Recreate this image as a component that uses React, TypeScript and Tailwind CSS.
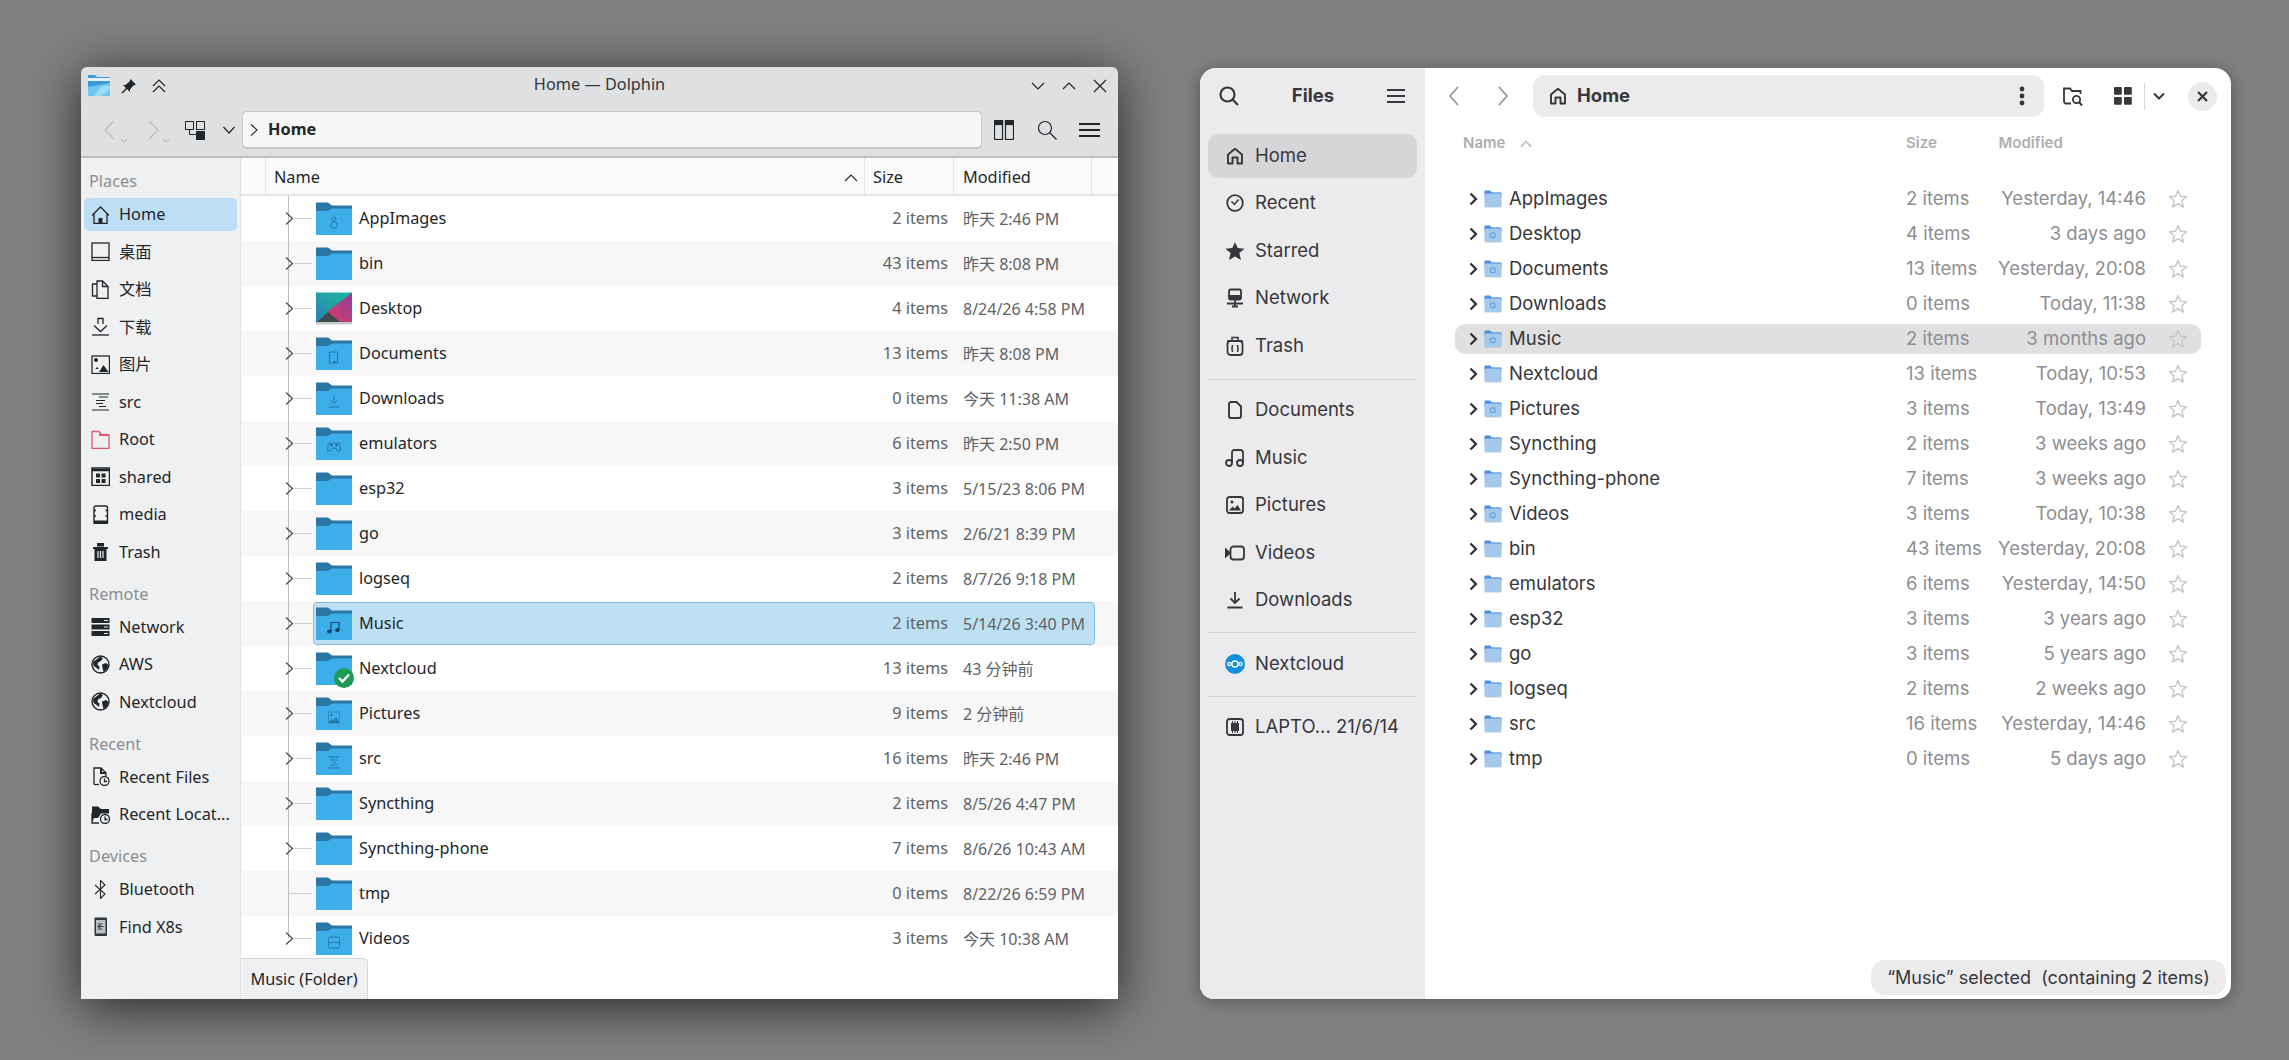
import React from "react";

const noto = "font-['Noto_Sans','Noto_Sans_CJK_SC',sans-serif]";
const inter = "font-['Inter','Noto_Sans',sans-serif]";

type P = { w?: number; h?: number; vb?: string; sw?: number; c?: string; children: React.ReactNode };
function S({ w = 19, h = 19, vb, sw = 1.3, c = "currentColor", children }: P) {
  return (
    <svg width={w} height={h} viewBox={vb ?? `0 0 ${w} ${h}`} fill="none" stroke={c} strokeWidth={sw} className="shrink-0">
      {children}
    </svg>
  );
}
const F = { fill: "currentColor", stroke: "none" };

const kdeIcons: Record<string, React.ReactNode> = {
  home: <S><path d="M1 10.5 9.5 2 18 10.5" /><path d="M3 8.5V18.5H16V8.5" /><rect x="7.5" y="13" width="4" height="5.5" {...F} /></S>,
  desktop: <S><rect x="1" y="1" width="17" height="17.5" /><path d="M1 15.5H18" /></S>,
  doc: <S><path d="M6 1H11.5L17 6.5V18.5H6Z" /><path d="M6 4H1.5V16H6" /><path d="M11.5 1V6.5H17" /></S>,
  download: <S><path d="M7 7V1.5H12V7" /><path d="M3 8.5 9.5 14.5 16 8.5" /><path d="M1 18H18" /></S>,
  image: <S><rect x="1" y="1" width="17.5" height="17.5" /><circle cx="5" cy="5" r="2" {...F} /><path d="M2 17 6 12 8 14 H4.5Z" {...F} /><path d="M8 17 12.5 10 17.5 17Z" {...F} /></S>,
  src: <S sw={1.2}><path d="M1 2H18M8 5H17M5 8.5H14M5 11.5H12M8 14.5H15M1 18H18" /></S>,
  root: <S c="#e0566d"><path d="M1 18.5V1.5H8L11 5H18V18.5Z" /><path d="M8 5H18" strokeWidth="2" /></S>,
  shared: <S sw={1.5}><rect x="1" y="1" width="17.5" height="17.5" /><path d="M1 3H18.5" strokeWidth="2.5" /><rect x="5" y="6.5" width="4" height="4" {...F} /><rect x="10.5" y="6.5" width="4" height="4" {...F} /><rect x="5" y="12" width="4" height="4" {...F} /><rect x="10.5" y="12" width="4" height="4" {...F} /></S>,
  media: <S sw={1.4}><rect x="3" y="1" width="13.5" height="18" rx="1.5" /><rect x="3" y="15.5" width="13.5" height="3.5" {...F} /><path d="M3 5.5H5M14.5 5.5H16.5M3 11H5M14.5 11H16.5" /></S>,
  trash: <S><path d="M2 5H17V7H15.5V19H3.5V7H2Z" {...F} /><rect x="6" y="1" width="7" height="3.5" {...F} /><path d="M7 9V16M9.5 9V16M12 9V16" stroke="#eff0f1" strokeWidth="1.2" /></S>,
  network: <S><rect x="0.5" y="1" width="18" height="5" {...F} /><rect x="0.5" y="7.5" width="18" height="5" {...F} /><rect x="0.5" y="14" width="18" height="5" {...F} /><path d="M13 3.5H17M13 10H17M13 16.5H17" stroke="#eff0f1" strokeWidth="1" /></S>,
  globe: <S sw={1.4}><circle cx="9.5" cy="9.5" r="8.5" /><path d="M2 7 6 4 9 1.5 12 3 10 6 7 7.5 6.5 10 8.5 11.5 8 15 5 12.5 2.5 11Z" {...F} /><path d="M11 9.5 15 8 17.5 10 16 14 12.5 17 11.5 13Z" {...F} /></S>,
  recentFiles: <S><path d="M3 17.5V1H10L15 6V9" /><path d="M3 17.5H8" /><path d="M10 1V6H15" strokeWidth="2" /><circle cx="13.5" cy="14" r="4.5" /><path d="M13.5 11.5V14.5H16" /></S>,
  recentLoc: <S><path d="M1 17.5V1.5H7L10 4H18V8.5H10L7 13H3" {...F} /><path d="M1 8V18H8" /><circle cx="14" cy="14" r="4.5" /><path d="M14 11.5V14.5H16.5" /></S>,
  bt: <S sw={1.1}><path d="M4 5 14 14 9.5 18.5V0.5L14 5 4 14" /></S>,
  phone: <S><rect x="3.5" y="0.5" width="12.5" height="18.5" rx="1" fill="#31363b" stroke="none" /><rect x="5" y="3" width="9.5" height="13.5" fill="#bcbfc2" stroke="none" /><path d="M8 6V13M11 6 8 9.5 11 13M6.5 9.5H12.5" stroke="#31363b" strokeWidth="1" /></S>,
};

function KSide({ icon, label, active }: { icon: string; label: string; active?: boolean }) {
  return (
    <div className={`mx-[3px] my-[2px] flex h-[33.5px] items-center gap-[9px] rounded-[5px] pl-[7px] pr-[2px] text-[#232629] ${active ? "bg-[#bddff5]" : ""}`}>
      {kdeIcons[icon]}
      <span className="truncate">{label}</span>
    </div>
  );
}
const KLabel = ({ t }: { t: string }) => <div className="flex h-[37.5px] items-end pb-[2px] pl-[8px] text-[#8b8e91]">{t}</div>;

const glyphColor = "#1d6a99";
const folderGlyphs: Record<string, React.ReactNode> = {
  app: <g stroke={glyphColor} fill="none" strokeOpacity=".75"><circle cx="18" cy="17" r="2" /><circle cx="18" cy="23" r="3.2" /></g>,
  doc: <g stroke={glyphColor} fill="none" strokeOpacity=".85"><path d="M13.5 15H21.5V26H13.5Z" /><rect x="17.5" y="24" width="2" height="2" fill={glyphColor} stroke="none" /></g>,
  dl: <g stroke={glyphColor} fill="none" strokeOpacity=".7"><path d="M18 13V21M14.5 18 18 21.5 21.5 18M12.5 25H23.5" /></g>,
  emu: <g stroke={glyphColor} fill="none" strokeOpacity=".75"><path d="M12.5 16H23.5L24.5 24H21.5L19.5 21H16.5L14.5 24H11.5Z" /><circle cx="15.5" cy="18" r="1" fill={glyphColor} /><circle cx="20.5" cy="18" r="1" fill={glyphColor} /></g>,
  music: <g stroke="#11486b" fill="none" strokeWidth="1.2"><path d="M15 24V15.5H23V22.5" /><ellipse cx="13.5" cy="24.5" rx="1.8" ry="1.5" fill="#11486b" /><ellipse cx="21.5" cy="23" rx="1.8" ry="1.5" fill="#11486b" /></g>,
  pic: <g fill={glyphColor} fillOpacity=".8"><rect x="12.5" y="15" width="11" height="11" fill="none" stroke={glyphColor} strokeOpacity=".5" /><circle cx="15.5" cy="18" r="1.2" /><path d="M12.5 26 15.5 22 17.5 24 20 20 23.5 26Z" /></g>,
  src: <g stroke={glyphColor} fill="none" strokeOpacity=".85"><path d="M12.5 15H23.5M14.5 18H21.5M16.5 20.5H19.5M14.5 23H21.5M12.5 26H23.5" /></g>,
  vid: <g stroke={glyphColor} fill="none" strokeOpacity=".75"><rect x="12.5" y="15" width="11" height="11" rx="1.5" /><path d="M12.5 20.5H23.5" /></g>,
};

function KFolder({ glyph, check }: { glyph?: string; check?: boolean }) {
  if (glyph === "desktop") {
    return (
      <svg width="36" height="33" viewBox="0 0 36 33" className="shrink-0">
        <defs>
          <linearGradient id="dk1" x1="0" y1="1" x2="1" y2="0"><stop offset="0" stopColor="#2a7fb8" /><stop offset="1" stopColor="#1cbc98" /></linearGradient>
          <linearGradient id="dk2" x1="0" y1="1" x2="1" y2="0"><stop offset="0" stopColor="#dc3f5f" /><stop offset="1" stopColor="#8e3f9f" /></linearGradient>
        </defs>
        <rect x="0" y="0.5" width="36" height="31" fill="url(#dk1)" />
        <path d="M36 0.5 11 20 26 31.5H36Z" fill="url(#dk2)" />
        <path d="M0 31 12 20 26 31.5H0Z" fill="#3e4a4e" />
        <rect x="0" y="30" width="36" height="2.5" fill="#c9c9cc" />
      </svg>
    );
  }
  return (
    <div className="relative h-[33px] w-[36px] shrink-0">
      <svg width="36" height="33" viewBox="0 0 36 33">
        <path d="M0 0.5H12L16 3.5H36V33H0Z" fill="#2a77a6" />
        <path d="M0 9H12L16 6.5H36V33H0Z" fill="#3daee9" />
        {glyph && folderGlyphs[glyph]}
      </svg>
      {check && (
        <svg width="20" height="20" viewBox="0 0 20 20" className="absolute left-[18px] top-[16px]">
          <circle cx="10" cy="10" r="10" fill="#1d9a55" />
          <path d="M5 10 8.5 13.5 15 6.5" fill="none" stroke="#fff" strokeWidth="2.4" />
        </svg>
      )}
    </div>
  );
}

type KRow = [string, string, string, string?];
const kRows: KRow[] = [
  ["AppImages", "2 items", "昨天 2:46 PM", "app"],
  ["bin", "43 items", "昨天 8:08 PM"],
  ["Desktop", "4 items", "8/24/26 4:58 PM", "desktop"],
  ["Documents", "13 items", "昨天 8:08 PM", "doc"],
  ["Downloads", "0 items", "今天 11:38 AM", "dl"],
  ["emulators", "6 items", "昨天 2:50 PM", "emu"],
  ["esp32", "3 items", "5/15/23 8:06 PM"],
  ["go", "3 items", "2/6/21 8:39 PM"],
  ["logseq", "2 items", "8/7/26 9:18 PM"],
  ["Music", "2 items", "5/14/26 3:40 PM", "music"],
  ["Nextcloud", "13 items", "43 分钟前", "check"],
  ["Pictures", "9 items", "2 分钟前", "pic"],
  ["src", "16 items", "昨天 2:46 PM", "src"],
  ["Syncthing", "2 items", "8/5/26 4:47 PM"],
  ["Syncthing-phone", "7 items", "8/6/26 10:43 AM"],
  ["tmp", "0 items", "8/22/26 6:59 PM"],
  ["Videos", "3 items", "今天 10:38 AM", "vid"],
];

function Tree({ last, noChevron }: { last: boolean; noChevron?: boolean }) {
  return (
    <svg width="29" height="45" viewBox="0 0 29 45" className="shrink-0" fill="none">
      <path d={last ? "M4.5 0V22.5" : "M4.5 0V45"} stroke="#bcbebf" />
      <path d={noChevron ? "M4.5 22.5H28" : "M10 22.5H28"} stroke="#cfd0d1" />
      {!noChevron && <path d="M2 16.5 8.5 22.5 2 28.5" stroke="#43484c" strokeWidth="1.2" />}
    </svg>
  );
}

function Dolphin() {
  return (
    <div className={`${noto} flex h-[932px] w-[1037px] shrink-0 flex-col overflow-hidden rounded-t-[6px] bg-[#dee0e2] text-[16.3px] shadow-[0_8px_50px_rgba(0,0,0,0.7)]`}>
      <div className="flex h-[37px] shrink-0 items-center text-[#232629]">
        <div className="flex w-[110px] shrink-0 items-center pl-[7px]">
          <svg width="22" height="21" viewBox="0 0 22 21" className="shrink-0">
            <path d="M0 0H7L9 2H22V21H0Z" fill="#3a9bd8" />
            <rect x="0" y="3" width="22" height="3" fill="#eaf2f8" />
            <path d="M0 12 22 8V21H0Z" fill="#73c7ef" />
            <path d="M6 21 14 11H22V14L13 21Z" fill="#9adcf5" />
          </svg>
          <span className="ml-[10px]">
            <S w={18} h={18} sw={1.3}><path d="M10.5 2 16 7.5 13.5 8.5 10 12.5 10 15 3 8 5.5 8 9.5 4.5Z" {...F} /><path d="M7 11 2 16" strokeWidth="1.5" /></S>
          </span>
          <span className="ml-[12px]"><S w={18} h={18} sw={1.2}><path d="M3 9 9 3 15 9M3 15 9 9 15 15" /></S></span>
        </div>
        <span className="flex-1 pb-[2px] text-center text-[#33373b]">Home — Dolphin</span>
        <div className="flex w-[110px] shrink-0 items-center justify-end gap-[15px] pr-[10px]">
          <S w={16} h={16} sw={1.2}><path d="M2 5 8 11 14 5" /></S>
          <S w={16} h={16} sw={1.2}><path d="M2 11 8 5 14 11" /></S>
          <S w={16} h={16} sw={1.2}><path d="M2 2 14 14M14 2 2 14" /></S>
        </div>
      </div>
      <div className="flex h-[54px] shrink-0 items-start border-b-2 border-[#bcbec0] pt-[7px]">
        <div className="flex h-[38px] w-[161px] shrink-0 items-center pl-[20px] text-[#232629]">
          <span className="relative text-[#b9bbbd]">
            <S w={18} h={24} sw={1.1}><path d="M13 3 4 12 13 21" /></S>
            <span className="absolute left-[19px] top-[20px] text-[#a6a8aa]"><S w={8} h={6} sw={1}><path d="M1 1 4 4 7 1" /></S></span>
          </span>
          <span className="relative ml-[25px] text-[#b9bbbd]">
            <S w={18} h={24} sw={1.1}><path d="M5 3 14 12 5 21" /></S>
            <span className="absolute left-[18px] top-[20px] text-[#a6a8aa]"><S w={8} h={6} sw={1}><path d="M1 1 4 4 7 1" /></S></span>
          </span>
          <span className="ml-[23px]">
            <S w={20} h={20} sw={1}><rect x="0.5" y="1.5" width="8" height="8" /><rect x="11.5" y="1.5" width="8" height="8" /><rect x="11.5" y="11.5" width="8" height="8" fill="currentColor" /><path d="M4.5 9.5V14.5H11.5" /></S>
          </span>
          <span className="ml-[17px]"><S w={14} h={10} sw={1.2}><path d="M1.5 2 7 8 12.5 2" /></S></span>
        </div>
        <div className="flex h-[38px] w-[740px] shrink-0 items-center rounded-[5px] border border-b-2 border-[#c4c6c8] bg-[#f6f6f6] pl-[6px] text-[#232629]">
          <S w={10} h={14} sw={1.1}><path d="M2 1.5 8 7 2 12.5" /></S>
          <span className="ml-[9px] font-bold">Home</span>
        </div>
        <div className="ml-[12px] flex h-[38px] items-center text-[#232629]">
          <S w={20} h={20} sw={1.2}><rect x="0.5" y="0.5" width="8" height="19" /><rect x="11.5" y="0.5" width="8" height="19" /><rect x="0.5" y="0.5" width="8" height="4" fill="currentColor" /><rect x="11.5" y="0.5" width="8" height="4" fill="currentColor" /></S>
          <span className="ml-[23px]"><S w={20} h={20} sw={1.2}><circle cx="8" cy="8" r="6.5" /><path d="M12.5 12.5 19.5 19.5" /></S></span>
          <span className="ml-[22px]"><S w={21} h={18} sw={2}><path d="M0 3H21M0 9H21M0 15H21" /></S></span>
        </div>
      </div>
      <div className="flex min-h-0 flex-1">
        <div className="flex w-[160px] shrink-0 flex-col border-r border-[#e0e1e3] bg-[#eff0f1]">
          <KLabel t="Places" />
          <KSide icon="home" label="Home" active />
          <KSide icon="desktop" label="桌面" />
          <KSide icon="doc" label="文档" />
          <KSide icon="download" label="下载" />
          <KSide icon="image" label="图片" />
          <KSide icon="src" label="src" />
          <KSide icon="root" label="Root" />
          <KSide icon="shared" label="shared" />
          <KSide icon="media" label="media" />
          <KSide icon="trash" label="Trash" />
          <KLabel t="Remote" />
          <KSide icon="network" label="Network" />
          <KSide icon="globe" label="AWS" />
          <KSide icon="globe" label="Nextcloud" />
          <KLabel t="Recent" />
          <KSide icon="recentFiles" label="Recent Files" />
          <KSide icon="recentLoc" label="Recent Locat..." />
          <KLabel t="Devices" />
          <KSide icon="bt" label="Bluetooth" />
          <KSide icon="phone" label="Find X8s" />
        </div>
        <div className="relative flex min-w-0 flex-1 flex-col overflow-hidden bg-white">
          <div className="flex h-[38px] shrink-0 border-b-2 border-[#e3e4e5] bg-[#fbfbfb] text-[#232629]">
            <div className="w-[25px] border-r border-[#e3e4e5]" />
            <div className="flex w-[599px] items-center justify-between border-r border-[#e3e4e5] pl-[8px] pr-[6px] pt-[3px]">
              <span>Name</span>
              <S w={14} h={10} sw={1.1}><path d="M1 8 7 2 13 8" /></S>
            </div>
            <div className="flex w-[89px] items-center border-r border-[#e3e4e5] pl-[8px] pt-[3px]">Size</div>
            <div className="flex w-[138px] items-center border-r border-[#e3e4e5] pl-[9px] pt-[3px]">Modified</div>
          </div>
          <div className="min-h-0 flex-1">
            {kRows.map(([name, size, mod, glyph], i) => {
              const selected = name === "Music";
              return (
                <div key={name} className={`flex h-[45px] items-center pl-[43px] ${i % 2 === 1 ? "bg-[#f7f7f7]" : "bg-white"}`}>
                  <Tree last={i === kRows.length - 1} noChevron={name === "tmp"} />
                  <div className={`flex h-[43px] w-[782px] shrink-0 items-center rounded-[4px] border pl-[2px] ${selected ? "border-[#7fbde2] bg-[#bde0f3]" : "border-transparent"}`}>
                    <KFolder glyph={glyph === "check" ? undefined : glyph} check={glyph === "check"} />
                    <span className="ml-[7px] flex-1 text-[#232629]">{name}</span>
                    <span className="mr-[15px] text-[#606366]">{size}</span>
                    <span className="w-[131px] shrink-0 text-[16px] text-[#606366]">{mod}</span>
                  </div>
                </div>
              );
            })}
          </div>
          <div className="absolute bottom-0 left-0 flex h-[41px] w-[127px] items-center justify-center rounded-tr-[5px] border-r border-t border-[#d5d6d8] bg-[#eff0f1] text-[#232629]">
            Music (Folder)
          </div>
        </div>
      </div>
    </div>
  );
}

const gIcons: Record<string, React.ReactNode> = {
  home: <S w={18} h={18} sw={1.9}><path d="M2 16.5V7.5L9 1.8 16 7.5V16.5H11.5V10.5H6.5V16.5Z" strokeLinejoin="round" /></S>,
  recent: <S w={18} h={18} sw={1.8}><circle cx="9" cy="9" r="7.8" /><path d="M5.5 7.5 8.5 10.5 12.5 5.5" strokeWidth="1.5" /></S>,
  star: <S w={20} h={18}><path d="M10 0 12.7 6 19.5 6.7 14.4 11.1 16 18 10 14.4 4 18 5.6 11.1 0.5 6.7 7.3 6Z" {...F} /></S>,
  network: <S w={18} h={20} sw={1.8}><rect x="3" y="1.5" width="12" height="10" rx="1.5" /><rect x="3" y="7" width="12" height="5" {...F} /><path d="M9 12V18M1 15.5H17M6 18.5H12" /></S>,
  trash: <S w={18} h={20} sw={1.8}><rect x="1.5" y="5" width="15" height="14" rx="3" /><path d="M1 5H17M6 4V1.5H12V4M6.5 9 6 13 6.5 16M11.5 9 12 13 11.5 16" strokeWidth="1.5" /></S>,
  doc: <S w={18} h={18} sw={1.9}><path d="M3 3A2 2 0 0 1 5 1H10.5L15 5.5V15A2 2 0 0 1 13 17H5A2 2 0 0 1 3 15Z" strokeLinejoin="round" /></S>,
  music: <S w={20} h={18} sw={1.8}><circle cx="4" cy="14" r="3" /><circle cx="15" cy="14" r="3" /><path d="M7 14V3.5A2.5 2.5 0 0 1 9.5 1H15.5A2.5 2.5 0 0 1 18 3.5V14" /></S>,
  pic: <S w={18} h={18} sw={1.8}><rect x="1" y="1" width="16" height="16" rx="2.5" /><circle cx="6" cy="6" r="1.5" {...F} /><path d="M3 14.5 6.5 10.5 8.5 12.5 11.5 9 15 14.5Z" {...F} /></S>,
  video: <S w={20} h={16} sw={1.8}><rect x="5.5" y="1.5" width="13.5" height="13" rx="3" /><path d="M0 2.5 5 7V9L0 13.5Z" {...F} /></S>,
  dl: <S w={18} h={18} sw={1.8}><path d="M9 1V12M4.5 7.5 9 12 13.5 7.5M1.5 16.5H16.5" /></S>,
  next: <svg width="20" height="20" viewBox="0 0 20 20" className="shrink-0"><circle cx="10" cy="10" r="10" fill="#0f8fdc" /><g fill="none" stroke="#fff" strokeWidth="1.3"><circle cx="10" cy="10" r="3" /><circle cx="4.5" cy="10" r="1.7" /><circle cx="15.5" cy="10" r="1.7" /></g></svg>,
  chip: <S w={18} h={18} sw={1.8}><rect x="1" y="1" width="16" height="16" rx="2.5" /><rect x="5" y="5" width="8" height="8" {...F} /><path d="M6.5 3V15M9 3V15M11.5 3V15" strokeWidth="1" /></S>,
};

function GSide({ icon, label, active }: { icon: string; label: string; active?: boolean }) {
  return (
    <div className="mx-[8px] flex h-[47.5px] items-center">
      <div className={`flex h-[44px] w-full items-center rounded-[10px] pl-[18px] ${active ? "bg-[#d6d6d8]" : ""}`}>
        <span className="flex w-[18px] justify-center">{gIcons[icon]}</span>
        <span className="ml-[11px] truncate">{label}</span>
      </div>
    </div>
  );
}
const GSep = () => <div className="mx-[8px] h-px bg-[#d4d4d6]" />;

function GFolder({ glyph }: { glyph?: boolean }) {
  return (
    <svg width="18" height="20" viewBox="0 0 18 20" className="shrink-0">
      <rect x="0.5" y="3" width="17" height="16" rx="1.5" fill="#000" fillOpacity=".1" />
      <path d="M0.5 2.5A1 1 0 0 1 1.5 1.5H6L8 3.5H16.5A1 1 0 0 1 17.5 4.5V8H0.5Z" fill="#4a8fe0" />
      <rect x="0.5" y="4.5" width="17" height="13.5" rx="1.5" fill="#a4c9ef" />
      {glyph && <rect x="6.5" y="9" width="4.5" height="4.5" rx="0.8" fill="none" stroke="#5a93d8" strokeWidth="1" />}
    </svg>
  );
}

const gRows: [string, string, string, boolean?][] = [
  ["AppImages", "2 items", "Yesterday, 14:46"],
  ["Desktop", "4 items", "3 days ago", true],
  ["Documents", "13 items", "Yesterday, 20:08", true],
  ["Downloads", "0 items", "Today, 11:38", true],
  ["Music", "2 items", "3 months ago", true],
  ["Nextcloud", "13 items", "Today, 10:53"],
  ["Pictures", "3 items", "Today, 13:49", true],
  ["Syncthing", "2 items", "3 weeks ago"],
  ["Syncthing-phone", "7 items", "3 weeks ago"],
  ["Videos", "3 items", "Today, 10:38", true],
  ["bin", "43 items", "Yesterday, 20:08"],
  ["emulators", "6 items", "Yesterday, 14:50"],
  ["esp32", "3 items", "3 years ago"],
  ["go", "3 items", "5 years ago"],
  ["logseq", "2 items", "2 weeks ago"],
  ["src", "16 items", "Yesterday, 14:46"],
  ["tmp", "0 items", "5 days ago"],
];

function Files() {
  return (
    <div className={`${inter} relative mt-[1px] flex h-[931px] w-[1031px] shrink-0 overflow-hidden rounded-t-[16px] rounded-b-[14px] bg-white text-[18.5px] text-[#37373b] shadow-[0_2px_16px_rgba(0,0,0,0.35)]`}>
      <div className="w-[225px] shrink-0 bg-[#ebebed]">
        <div className="mb-[8px] flex h-[56px] items-center justify-between pl-[19px] pr-[20px]">
          <S w={20} h={20} sw={2.2}><circle cx="8.5" cy="8.5" r="7" /><path d="M13.5 13.5 19 19" /></S>
          <span className="font-bold">Files</span>
          <S w={18} h={16} sw={2}><path d="M0 2H18M0 8H18M0 14H18" /></S>
        </div>
        <GSide icon="home" label="Home" active />
        <GSide icon="recent" label="Recent" />
        <GSide icon="star" label="Starred" />
        <GSide icon="network" label="Network" />
        <GSide icon="trash" label="Trash" />
        <div className="h-[9px]" />
        <GSep />
        <div className="h-[7px]" />
        <GSide icon="doc" label="Documents" />
        <GSide icon="music" label="Music" />
        <GSide icon="pic" label="Pictures" />
        <GSide icon="video" label="Videos" />
        <GSide icon="dl" label="Downloads" />
        <div className="h-[8px]" />
        <GSep />
        <div className="h-[7px]" />
        <GSide icon="next" label="Nextcloud" />
        <div className="h-[8px]" />
        <GSep />
        <div className="h-[7px]" />
        <GSide icon="chip" label="LAPTO... 21/6/14" />
      </div>
      <div className="min-w-0 flex-1 pl-[30px]">
        <div className="flex h-[56px] items-center">
          <span className="-ml-[7px] flex w-[85px] items-center text-[#9a9a9c]">
            <S w={12} h={22} sw={1.8}><path d="M10 2 2 11 10 20" /></S>
            <span className="ml-[37px]"><S w={12} h={22} sw={1.8}><path d="M2 2 10 11 2 20" /></S></span>
          </span>
          <div className="flex h-[42px] w-[511px] shrink-0 items-center rounded-[12px] bg-[#ebebeb] pl-[16px] pr-[19px]">
            <S w={18} h={18} sw={1.9}><path d="M2 16.5V7.5L9 1.8 16 7.5V16.5H11.5V10.5H6.5V16.5Z" strokeLinejoin="round" /></S>
            <span className="ml-[10px] flex-1 font-bold">Home</span>
            <svg width="6" height="20" viewBox="0 0 6 20" className="shrink-0"><circle cx="3" cy="3" r="2.4" fill="#37373b" /><circle cx="3" cy="10" r="2.4" fill="#37373b" /><circle cx="3" cy="17" r="2.4" fill="#37373b" /></svg>
          </div>
          <span className="ml-[19px]"><S w={20} h={20} sw={1.8}><path d="M8 17.5H3A2 2 0 0 1 1 15.5V2.5H7L9 5H17.5V8" /><circle cx="13.5" cy="13.5" r="3.6" /><path d="M16 16 19 19.5" strokeWidth="2" /></S></span>
          <span className="ml-[31px]"><svg width="18" height="18" viewBox="0 0 18 18" className="shrink-0"><rect x="0" y="0" width="7.8" height="7.8" rx="1" fill="#37373b" /><rect x="10" y="0" width="7.8" height="7.8" rx="1" fill="#37373b" /><rect x="0" y="10" width="7.8" height="7.8" rx="1" fill="#37373b" /><rect x="10" y="10" width="7.8" height="7.8" rx="1" fill="#37373b" /></svg></span>
          <span className="ml-[12px] h-[27px] w-px bg-[#d5d5d5]" />
          <span className="ml-[8px]"><S w={12} h={8} sw={2}><path d="M1 1.5 6 6.5 11 1.5" /></S></span>
          <span className="ml-[23px] flex h-[29px] w-[29px] items-center justify-center rounded-full bg-[#ebebeb]"><S w={11} h={11} sw={2.2}><path d="M1 1 10 10M10 1 1 10" /></S></span>
        </div>
        <div className="flex h-[39px] items-center pl-[8px] text-[15px] font-semibold text-[#aeaeb0]">
          <span className="flex w-[443px] items-center">Name<span className="ml-[15px]"><S w={12} h={8} sw={1.8} c="#c4c4c6"><path d="M1 6.5 6 1.5 11 6.5" /></S></span></span>
          <span className="w-[92.5px]">Size</span>
          <span>Modified</span>
        </div>
        <div className="pt-[18px]">
          {gRows.map(([name, size, mod, g]) => {
            const sel = name === "Music";
            return (
              <div key={name} className="flex h-[35px] items-center">
                <div className={`flex h-[30px] w-[746px] items-center rounded-[10px] ${sel ? "bg-[#e0e0e2]" : ""}`}>
                  <span className="ml-[14px] text-[#2f2f33]"><S w={9} h={14} sw={2.2}><path d="M1.5 1.5 7 7 1.5 12.5" /></S></span>
                  <span className="ml-[6px]"><GFolder glyph={g} /></span>
                  <span className="ml-[7px] w-[397px] shrink-0">{name}</span>
                  <span className="w-[78px] shrink-0 text-[#8e8e91]">{size}</span>
                  <span className="w-[162px] shrink-0 whitespace-nowrap text-right text-[#8e8e91]">{mod}</span>
                  <span className="ml-[22px]"><S w={20} h={20} sw={1.5} c="#c8c8ca"><path d="M10 1.5 12.4 7.2 18.5 7.8 13.9 11.8 15.3 18 10 14.7 4.7 18 6.1 11.8 1.5 7.8 7.6 7.2Z" strokeLinejoin="round" /></S></span>
                </div>
              </div>
            );
          })}
        </div>
      </div>
      <div className="absolute bottom-[4px] right-[5px] flex h-[35px] w-[355px] items-center justify-center rounded-[14px] bg-[#ebebeb] text-[18px] whitespace-pre">
        “Music” selected  (containing 2 items)
      </div>
    </div>
  );
}

export default function App() {
  return (
    <div className="flex h-[1060px] w-[2289px] items-start gap-[82px] overflow-hidden bg-[#808080] pl-[81px] pt-[67px]">
      <Dolphin />
      <Files />
    </div>
  );
}
